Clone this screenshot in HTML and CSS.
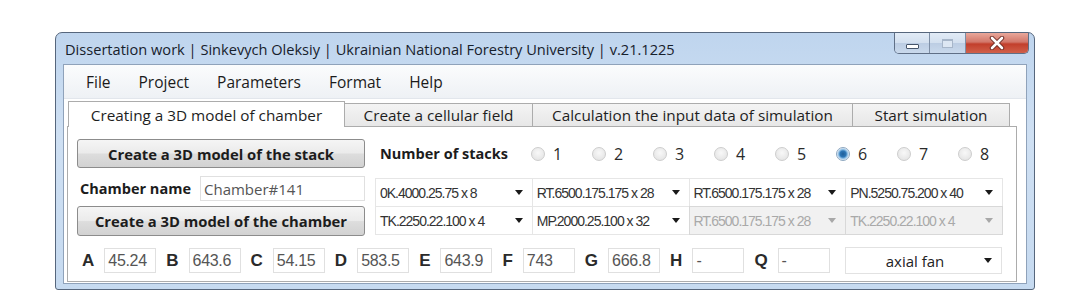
FILE: index.html
```html
<!DOCTYPE html>
<html lang="en">
<head>
    <meta charset="UTF-8">
    <title>Dissertation work</title>
    <link rel="stylesheet" href="styles.css">
</head>
<body>
    <div class="window">
        <div class="titlebar">
            <span class="title">Dissertation work | Sinkevych Oleksiy | Ukrainian National Forestry University | v.21.1225</span>
            <div class="caption-buttons">
                <span class="cap-btn cap-min"><span class="glyph-min"></span></span>
                <span class="cap-btn cap-max"><span class="glyph-max"></span></span>
                <span class="cap-btn cap-close">
                    <svg width="16" height="14" viewBox="0 0 16 14">
                        <path d="M3 2 L13 12 M13 2 L3 12" stroke="#6b2a22" stroke-width="4.5" stroke-linecap="round"/>
                        <path d="M3 2 L13 12 M13 2 L3 12" stroke="#ffffff" stroke-width="2.6" stroke-linecap="round"/>
                    </svg>
                </span>
            </div>
        </div>

        <div class="client">
            <div class="menubar">
                <span class="menu-item">File</span>
                <span class="menu-item">Project</span>
                <span class="menu-item">Parameters</span>
                <span class="menu-item">Format</span>
                <span class="menu-item">Help</span>
            </div>

            <div class="tabs">
                <div class="tab tab-model active">Creating a 3D model of chamber</div>
                <div class="tab tab-field">Create a cellular field</div>
                <div class="tab tab-input">Calculation the input data of simulation</div>
                <div class="tab tab-start">Start simulation</div>
            </div>

            <div class="panel">
                <div class="row-top">
                    <button class="btn">Create a 3D model of the stack</button>
                    <span class="label stacks-label">Number of stacks</span>
                    <div class="radios">
                        <span class="radio"><span class="radio-dot"></span>1</span>
                        <span class="radio"><span class="radio-dot"></span>2</span>
                        <span class="radio"><span class="radio-dot"></span>3</span>
                        <span class="radio"><span class="radio-dot"></span>4</span>
                        <span class="radio"><span class="radio-dot"></span>5</span>
                        <span class="radio checked"><span class="radio-dot"></span>6</span>
                        <span class="radio"><span class="radio-dot"></span>7</span>
                        <span class="radio"><span class="radio-dot"></span>8</span>
                    </div>
                </div>

                <div class="row-mid">
                    <div class="left-col">
                        <div class="name-row">
                            <span class="label">Chamber name</span>
                            <span class="textbox name-box">Chamber#141</span>
                        </div>
                        <button class="btn">Create a 3D model of the chamber</button>
                    </div>
                    <div class="combo-grid">
                        <span class="combo">0K.4000.25.75 x 8<span class="arrow"></span></span>
                        <span class="combo">RT.6500.175.175 x 28<span class="arrow"></span></span>
                        <span class="combo">RT.6500.175.175 x 28<span class="arrow"></span></span>
                        <span class="combo">PN.5250.75.200 x 40<span class="arrow"></span></span>
                        <span class="combo">TK.2250.22.100 x 4<span class="arrow"></span></span>
                        <span class="combo">MP.2000.25.100 x 32<span class="arrow"></span></span>
                        <span class="combo disabled">RT.6500.175.175 x 28<span class="arrow"></span></span>
                        <span class="combo disabled">TK.2250.22.100 x 4<span class="arrow"></span></span>
                    </div>
                </div>

                <div class="row-dims">
                    <span class="dim-letter">A</span><span class="textbox dim-box">45.24</span>
                    <span class="dim-letter">B</span><span class="textbox dim-box">643.6</span>
                    <span class="dim-letter">C</span><span class="textbox dim-box">54.15</span>
                    <span class="dim-letter">D</span><span class="textbox dim-box">583.5</span>
                    <span class="dim-letter">E</span><span class="textbox dim-box">643.9</span>
                    <span class="dim-letter">F</span><span class="textbox dim-box">743</span>
                    <span class="dim-letter">G</span><span class="textbox dim-box">666.8</span>
                    <span class="dim-letter">H</span><span class="textbox dim-box">-</span>
                    <span class="dim-letter">Q</span><span class="textbox dim-box">-</span>
                    <span class="fan-combo"><span class="fan-text">axial fan</span><span class="arrow"></span></span>
                </div>
            </div>
        </div>
    </div>
</body>
</html>
```

FILE: styles.css
```css
body {
    margin: 0;
    background: #ffffff;
    font-family: "Open Sans", "Noto Sans", sans-serif;
    color: #1a1a1a;
}

/* Window frame */
.window {
    box-sizing: border-box;
    width: 980px;
    height: 258px;
    margin: 32px 0 0 55px;
    padding: 0 7px 5px 7px;
    border: 1px solid #56667c;
    border-radius: 7px 7px 3px 3px;
    background: linear-gradient(#bfd5ee, #cfe0f3 40%, #c6daf0);
    display: flex;
    flex-direction: column;
}

.titlebar {
    height: 31px;
    display: flex;
    justify-content: space-between;
    padding-left: 2px;
}

.title {
    align-self: center;
    font-size: 14.6px;
    color: #17212c;
    margin-top: 1px;
    white-space: nowrap;
}

.caption-buttons {
    display: flex;
    flex-shrink: 0;
    height: 20px;
    margin-right: -2px;
    border: 1px solid #5f6f86;
    border-top: none;
    border-radius: 0 0 5px 5px;
    overflow: hidden;
}

.cap-btn {
    display: flex;
    align-items: center;
    justify-content: center;
    height: 100%;
    background: linear-gradient(#e2ebf6, #d3e0ef 48%, #bccde3 52%, #c9d9ec);
}

.cap-min {
    width: 34px;
    border-right: 1px solid #7d8ea5;
}

.cap-max {
    width: 35px;
    border-right: 1px solid #7d8ea5;
}

.cap-close {
    width: 62px;
    background: linear-gradient(#e9a89b, #d2776a 45%, #c23f2c 55%, #d0604a);
}

.glyph-min {
    width: 11px;
    height: 3px;
    margin-top: 6px;
    background: #ffffff;
    border: 1px solid #47566b;
    border-radius: 1px;
}

.glyph-max {
    width: 9px;
    height: 6px;
    border: 1px solid #a7b6c9;
    border-top-width: 2px;
    background: #dde7f3;
}

/* Client area */
.client {
    flex: 1;
    background: #ffffff;
    border: 1px solid #8fa2ba;
    display: flex;
    flex-direction: column;
}

.menubar {
    height: 33px;
    display: flex;
    align-items: center;
    padding-left: 8px;
    background: linear-gradient(#fbfcfd, #eef1f5);
    border-bottom: 1px solid #e2e6ec;
}

.menu-item {
    font-size: 15.5px;
    padding: 0 14px;
    color: #1b1b1b;
}

/* Tabs */
.tabs {
    display: flex;
    align-items: flex-end;
    height: 24px;
    margin-top: 3px;
    padding-left: 4px;
}

.tab {
    box-sizing: border-box;
    flex-shrink: 0;
    height: 23px;
    display: flex;
    align-items: center;
    justify-content: center;
    font-size: 15.3px;
    color: #1e1e1e;
    white-space: nowrap;
    background: linear-gradient(#f4f4f4, #e7e7e7);
    border: 1px solid #acacac;
    border-bottom: none;
    margin-right: -1px;
}

.tab.active {
    height: 26px;
    background: #ffffff;
    position: relative;
    z-index: 1;
    margin-bottom: -1px;
}

.tab-model { width: 277px; }
.tab-field { width: 189px; }
.tab-input { width: 321px; }
.tab-start { width: 158px; }

.panel {
    box-sizing: border-box;
    width: 950px;
    height: 156px;
    margin-left: 3px;
    padding: 12px 14px 0 9px;
    border: 1px solid #acacac;
    background: #ffffff;
}

.row-top {
    display: flex;
    align-items: center;
    height: 29px;
}

.btn {
    box-sizing: border-box;
    flex-shrink: 0;
    width: 288px;
    height: 29px;
    font-family: "Open Sans", "Noto Sans", sans-serif;
    font-size: 14.8px;
    font-weight: bold;
    color: #1c1c1c;
    white-space: nowrap;
    border: 1px solid #8c8c8c;
    border-radius: 3px;
    background: linear-gradient(#f5f5f5, #ebebeb 48%, #dddddd 52%, #d2d2d2);
    padding: 0;
}

.label {
    font-size: 14.5px;
    font-weight: bold;
    color: #1c1c1c;
    white-space: nowrap;
}

.stacks-label {
    flex-shrink: 0;
    margin-left: 15px;
}

.radios {
    display: flex;
    flex-shrink: 0;
    margin-left: 23px;
}

.radio {
    width: 61px;
    display: flex;
    align-items: center;
    font-size: 16px;
    color: #2a2a2a;
}

.radio-dot {
    box-sizing: border-box;
    width: 14px;
    height: 14px;
    margin-right: 8px;
    border-radius: 50%;
    border: 1px solid #cdcdcd;
    background: radial-gradient(circle at 50% 40%, #f8f8f8, #e0e0e0);
}

.radio.checked .radio-dot {
    border-color: #8ea7bf;
    background: radial-gradient(circle, #1f5e98 0, #2e76b6 3px, #8cbde4 4.5px, #e4eef8 6px);
}

.row-mid {
    display: flex;
    margin-top: 8px;
    height: 60px;
}

.left-col {
    width: 288px;
    flex-shrink: 0;
    display: flex;
    flex-direction: column;
    gap: 5px;
}

.name-row {
    display: flex;
    align-items: center;
    height: 25px;
    padding-left: 3px;
}

.textbox {
    box-sizing: border-box;
    height: 25px;
    display: flex;
    align-items: center;
    border: 1px solid #e0e0e0;
    color: #555555;
    background: #ffffff;
    white-space: nowrap;
}

.name-box {
    width: 165px;
    margin-left: auto;
    padding-left: 3px;
    font-size: 15px;
}

.left-col .btn {
    height: 30px;
}

.combo-grid {
    flex: 1;
    margin-left: 10px;
    margin-top: 2px;
    display: grid;
    grid-template-columns: repeat(4, 1fr);
    grid-template-rows: 28px 28px;
}

.combo {
    display: flex;
    align-items: center;
    justify-content: space-between;
    padding: 0 9px 0 4px;
    border: 1px solid #e6e6e6;
    margin: 0 -1px -1px 0;
    font-family: "Liberation Sans", Arial, sans-serif;
    font-size: 14px;
    letter-spacing: -1px;
    color: #333333;
    white-space: nowrap;
}

.combo.disabled {
    background: #f1f1f1;
    color: #a9a9a9;
    border-color: #d8d8d8;
}

.arrow {
    width: 0;
    height: 0;
    border-left: 4px solid transparent;
    border-right: 4px solid transparent;
    border-top: 5px solid #1a1a1a;
}

.combo.disabled .arrow {
    border-top-color: #a8a8a8;
}

.row-dims {
    display: flex;
    align-items: center;
    margin-top: 12px;
    height: 25px;
    padding-left: 5px;
}

.dim-letter {
    font-family: "Liberation Sans", Arial, sans-serif;
    font-weight: bold;
    font-size: 17px;
    color: #2a2a2a;
    margin-right: 10px;
}

.dim-box {
    width: 52px;
    flex-shrink: 0;
    margin-right: 10px;
    padding-left: 3px;
    font-family: "Liberation Sans", Arial, sans-serif;
    font-size: 16px;
    letter-spacing: -0.3px;
}

.fan-combo {
    box-sizing: border-box;
    flex-shrink: 0;
    width: 157px;
    height: 27px;
    margin-left: auto;
    display: flex;
    align-items: center;
    padding: 0 9px 0 0;
    border: 1px solid #e2e2e2;
}

.fan-text {
    flex: 1;
    text-align: center;
    font-size: 15px;
    color: #222222;
}
```
